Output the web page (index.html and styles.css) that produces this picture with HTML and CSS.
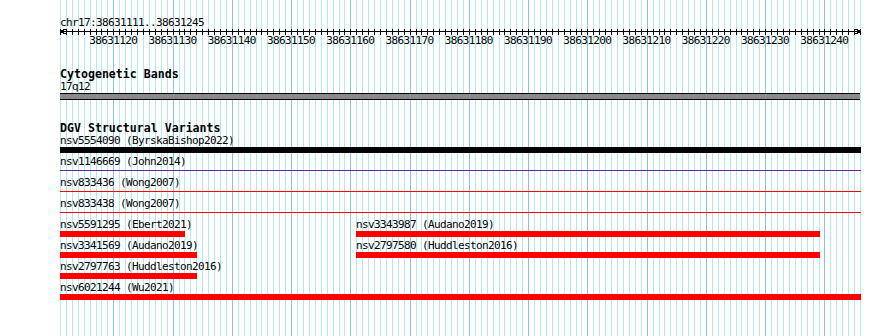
FILE: index.html
```html
<!DOCTYPE html>
<html lang="en">
<head>
  <meta charset="UTF-8">
  <title>chr17:38631111..38631245</title>
  <link rel="stylesheet" href="styles.css">
</head>
<body>
  <div class="browser">
    <!-- base grid, filled in by the script below -->
    <svg class="grid" id="grid" width="801" height="336"></svg>

    <div class="panel">
      <div class="locus">chr17:38631111..38631245</div>
      <svg class="ruler" id="ruler" width="801" height="7"></svg>
      <div class="ruler-labels">
        <span>38631120</span>
        <span>38631130</span>
        <span>38631140</span>
        <span>38631150</span>
        <span>38631160</span>
        <span>38631170</span>
        <span>38631180</span>
        <span>38631190</span>
        <span>38631200</span>
        <span>38631210</span>
        <span>38631220</span>
        <span>38631230</span>
        <span>38631240</span>
      </div>

      <!-- Cytogenetic Bands -->
      <div class="track-title">Cytogenetic Bands</div>
      <div class="label">17q12</div>
      <div class="band"></div>

      <!-- DGV Structural Variants -->
      <div class="track-title">DGV Structural Variants</div>
      <div class="sv-row">
        <div class="feature" style="width:801px">
          <div class="label">nsv5554090 (ByrskaBishop2022)</div>
          <div class="bar bar-black"></div>
        </div>
      </div>
      <div class="sv-row">
        <div class="feature" style="width:801px">
          <div class="label">nsv1146669 (John2014)</div>
          <div class="bar-line line-purple"></div>
        </div>
      </div>
      <div class="sv-row">
        <div class="feature" style="width:801px">
          <div class="label">nsv833436 (Wong2007)</div>
          <div class="bar-line"></div>
        </div>
      </div>
      <div class="sv-row">
        <div class="feature" style="width:801px">
          <div class="label">nsv833438 (Wong2007)</div>
          <div class="bar-line"></div>
        </div>
      </div>
      <div class="sv-row">
        <div class="feature" style="width:125px">
          <div class="label">nsv5591295 (Ebert2021)</div>
          <div class="bar"></div>
        </div>
        <div class="feature" style="width:464px; margin-left:171px">
          <div class="label">nsv3343987 (Audano2019)</div>
          <div class="bar"></div>
        </div>
      </div>
      <div class="sv-row">
        <div class="feature" style="width:137px">
          <div class="label">nsv3341569 (Audano2019)</div>
          <div class="bar"></div>
        </div>
        <div class="feature" style="width:464px; margin-left:159px">
          <div class="label">nsv2797580 (Huddleston2016)</div>
          <div class="bar"></div>
        </div>
      </div>
      <div class="sv-row">
        <div class="feature" style="width:137px">
          <div class="label">nsv2797763 (Huddleston2016)</div>
          <div class="bar"></div>
        </div>
      </div>
      <div class="sv-row">
        <div class="feature" style="width:801px">
          <div class="label">nsv6021244 (Wu2021)</div>
          <div class="bar"></div>
        </div>
      </div>
    </div>
  </div>

  <script>
    // Region shown: 135 bases over 800px
    const START = 38631111;
    const BASES = 135;
    const WIDTH = 800;
    const step = WIDTH / BASES;
    const svgNS = 'http://www.w3.org/2000/svg';

    const grid = document.getElementById('grid');
    const ruler = document.getElementById('ruler');

    function addLine(svg, x1, y1, x2, y2, cls) {
      const line = document.createElementNS(svgNS, 'line');
      line.setAttribute('x1', x1);
      line.setAttribute('y1', y1);
      line.setAttribute('x2', x2);
      line.setAttribute('y2', y2);
      line.setAttribute('class', cls);
      svg.appendChild(line);
    }

    // one grid line and one ruler tick per base
    for (let i = 0; i <= BASES; i++) {
      const x = Math.round(i * step) + 0.5;
      const major = (START + i) % 10 === 0;
      addLine(grid, x, 0, x, 336, major ? 'grid-major' : 'grid-minor');
      addLine(ruler, x, 0, x, 6, 'tick');
    }

    // axis with arrow heads
    addLine(ruler, 0, 2.5, WIDTH, 2.5, 'tick');
    const arrows = [
      '5.5,0 0.5,2.5 5.5,5',
      (WIDTH - 5) + '.5,0 ' + WIDTH + '.5,2.5 ' + (WIDTH - 5) + '.5,5'
    ];
    arrows.forEach(function (points) {
      const head = document.createElementNS(svgNS, 'polyline');
      head.setAttribute('points', points);
      head.setAttribute('class', 'arrow');
      ruler.appendChild(head);
    });
  </script>
</body>
</html>
```

FILE: styles.css
```css
/* General */
body {
  margin: 0;
  width: 890px;
  height: 336px;
  overflow: hidden;
  background: #fff;
  color: #000;
  font-family: 'DejaVu Sans Mono', 'Liberation Mono', monospace;
  font-size: 11px;
  letter-spacing: -0.62px;
}

.browser {
  position: relative;
  height: 336px;
}

/* Grid behind the tracks */
.grid {
  position: absolute;
  top: 0;
  left: 60px;
  z-index: 0;
  shape-rendering: crispEdges;
}

.grid-minor {
  stroke: #aeeaee;
  stroke-width: 1;
}

.grid-major {
  stroke: #85c2ea;
  stroke-width: 1;
}

.panel {
  position: relative;
  z-index: 1;
  padding: 16px 0 0 60px;
  width: 801px;
}

/* Ruler */
.locus {
  height: 13px;
  line-height: 13px;
  white-space: nowrap;
}

.ruler {
  display: block;
  shape-rendering: crispEdges;
}

.ruler .tick {
  stroke: #000;
  stroke-width: 1;
}

.ruler .arrow {
  fill: none;
  stroke: #000;
  stroke-width: 1;
}

.ruler-labels {
  display: flex;
  gap: 11.26px;
  padding-left: 29.33px;
  height: 10px;
  line-height: 10px;
}

.ruler-labels span {
  flex: none;
  width: 48px;
  white-space: nowrap;
}

/* Tracks */
.track-title {
  margin-top: 22px;
  height: 12px;
  line-height: 12px;
  font-size: 11.6px;
  font-weight: bold;
  letter-spacing: 0;
  white-space: nowrap;
}

.label {
  height: 13px;
  line-height: 13px;
  white-space: nowrap;
}

.band {
  width: 800px;
  height: 5px;
  box-sizing: content-box;
  border-top: 1px solid #000;
  border-bottom: 1px solid #000;
  background: #8a8a8a;
}

/* Structural variant rows */
.sv-row {
  display: flex;
  height: 21px;
}

.feature {
  flex: none;
}

.bar {
  height: 6px;
  background: #ff0000;
}

.bar-black {
  background: #000;
}

.bar-line {
  height: 1px;
  margin-top: 2px;
  background: #ff0000;
}

.line-purple {
  background: #5c2ca0;
}
```
